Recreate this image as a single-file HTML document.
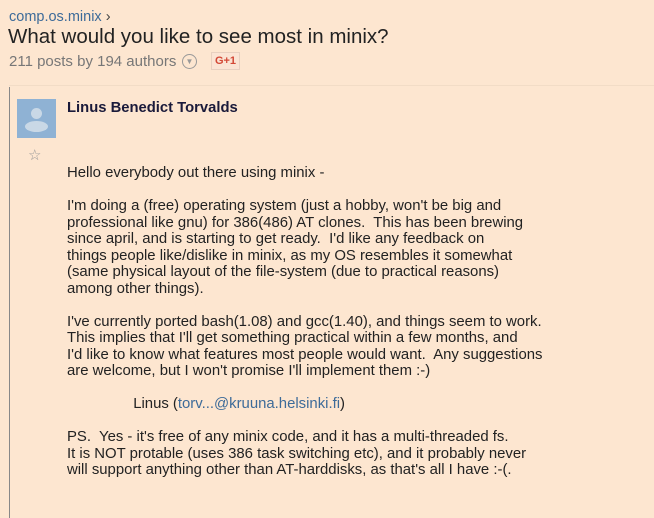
<!DOCTYPE html>
<html><head><style>
body{margin:0;width:654px;height:518px;background:#fde6d0;font-family:"Liberation Sans",Arial,sans-serif;overflow:hidden;position:relative;color:#222}
.a{position:absolute}
</style></head><body>
<div class="a" style="left:9px;top:9px;font-size:14.5px;color:#3d6b99">comp.os.minix <span style="color:#444">›</span></div>
<div class="a" style="left:8px;top:25px;font-size:20.5px;color:#222">What would you like to see most in minix?</div>
<div class="a" style="left:9px;top:53px;font-size:15px;color:#777">211 posts by 194 authors</div>
<div class="a" style="left:182px;top:54px;width:15px;height:15px;border:1px solid #999;border-radius:50%;box-sizing:border-box;font-size:8px;color:#999;text-align:center;line-height:14px">▼</div>
<div class="a" style="left:211px;top:52px;width:27px;height:16px;border:1px solid #e8d0c0;background:#fbe4d4;color:#d34836;font-size:11px;font-weight:bold;text-align:center;line-height:16px">G+1</div>
<div class="a" style="left:9px;top:85px;width:645px;height:1px;background:#f2dcc6"></div>
<div class="a" style="left:9px;top:87px;width:1px;height:431px;background:#888"></div>
<div class="a" style="left:17px;top:99px;width:39px;height:39px;background:#8fb2d4">
 <div class="a" style="left:14px;top:9px;width:11px;height:11px;border-radius:50%;background:#c9d8e6"></div>
 <div class="a" style="left:8px;top:22px;width:23px;height:11px;border-radius:50%;background:#c9d8e6"></div>
</div>
<div class="a" style="left:28px;top:146px;font-size:15px;color:#999">☆</div>
<div class="a" style="left:67px;top:100px;font-size:14.8px;font-weight:bold;color:#1a1a3a">Linus Benedict Torvalds</div>
<div class="a" style="left:67px;top:165px;font-size:14.9px;line-height:16.5px;color:#222;white-space:pre">Hello everybody out there using minix -

I'm doing a (free) operating system (just a hobby, won't be big and
professional like gnu) for 386(486) AT clones.  This has been brewing
since april, and is starting to get ready.  I'd like any feedback on
things people like/dislike in minix, as my OS resembles it somewhat
(same physical layout of the file-system (due to practical reasons)
among other things).

I've currently ported bash(1.08) and gcc(1.40), and things seem to work.
This implies that I'll get something practical within a few months, and
I'd like to know what features most people would want.  Any suggestions
are welcome, but I won't promise I'll implement them :-)

                Linus (<span style="color:#3d6b99">torv...@kruuna.helsinki.fi</span>)

PS.  Yes - it's free of any minix code, and it has a multi-threaded fs.
It is NOT protable (uses 386 task switching etc), and it probably never
will support anything other than AT-harddisks, as that's all I have :-(.</div>
</body></html>
